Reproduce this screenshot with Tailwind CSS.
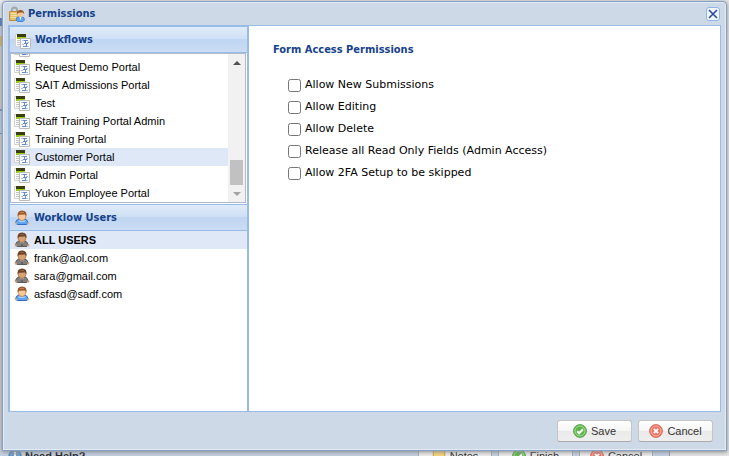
<!DOCTYPE html>
<html lang="en">
<head>
    <meta charset="UTF-8">
    <meta name="viewport" content="width=device-width, initial-scale=1.0">
    <title>Permissions</title>
    <script src="https://cdn.jsdelivr.net/npm/@tailwindcss/browser@4"></script>
</head>
<body class="relative flex flex-col h-screen overflow-hidden bg-[#e4e4e6] font-['Liberation_Sans',Arial,sans-serif] text-[11px] text-black">
    <!-- icons -->
    <svg class="hidden">
        <symbol id="form" viewBox="0 0 16 16">
            <path fill="#fff" stroke="#d2d2d2" d="M.5 1.500h10v12H.5z"/>
            <path fill="#3a3d10" d="M2 1h9v3H2z"/>
            <path fill="#98cc10" d="M2 4h9v2H2z"/>
            <path stroke="#c4c4c4" d="M2 7.500h3M2 9.500h3M2 11.500h3"/>
            <path fill="#fbfcff" stroke="#bcbcbc" d="M5.500 5.500h10v10h-10z"/>
            <path fill="none" stroke="#a9bfe6" d="M7 7.500h2M12 9.500h2M7 11.500h2M12 13.500h2"/>
            <path fill="none" stroke="#6689cc" d="M9 7.500h4M10.500 8v2M9 10.500h4M11.500 11v2M8 13.500h4"/>
        </symbol>
        <symbol id="user" viewBox="0 0 16 16">
            <path fill="#5ea6f5" stroke="#2c6dca" d="M1.500 12.500q.8-3 3.500-3.500h5.500q3 .5 3.500 3.500-.5 2-2 2H3.500q-1.500 0-2-2z"/>
            <path fill="#a9d2fd" d="M4 10.500h8l-1.500 1.500h-5z"/>
            <path fill="#eeb47f" d="M.5 12.500h2l.5 2H1zM13.500 12.500h2l-.5 2h-2z"/>
            <path fill="#f7c796" stroke="#c07c46" stroke-width=".7" d="M4.300 4h7.400v3.200q-.7 3.300-3.700 3.300T4.300 7.200z"/>
            <path fill="#9a5a2c" d="M3.600 6.500Q2.900.7 8 .5q5.400.2 4.400 6l-1.400-2.300-6 .5z"/>
            <path stroke="#c08050" d="M6 2.500h4"/>
        </symbol>
        <symbol id="user-gray" viewBox="0 0 16 16">
            <path fill="#808080" stroke="#5b5b5b" d="M1.500 12.500q.8-3 3.500-3.500h5.500q3 .5 3.500 3.500-.5 2-2 2H3.500q-1.500 0-2-2z"/>
            <path fill="#ddd" d="M6 10h4l-2 2.500z"/>
            <path fill="#444" d="M7.500 10.500h1v3.500h-1z"/>
            <path fill="#d9a273" d="M.5 12.500h2l.5 2H1zM13.500 12.500h2l-.5 2h-2z"/>
            <path fill="#d9a273" stroke="#94603a" stroke-width=".7" d="M4.300 4h7.400v3.200q-.7 3.300-3.700 3.300T4.300 7.200z"/>
            <path fill="#6b4329" d="M3.600 6.500Q2.900.7 8 .5q5.400.2 4.400 6l-1.400-2.300-6 .5z"/>
            <path stroke="#8d6142" d="M6 2.500h4"/>
        </symbol>
        <symbol id="lock-user" viewBox="0 0 16 16">
            <path fill="none" stroke="#a5a5a5" stroke-width="2" d="M3 7V4q0-2.500 2.500-2.500T8 4v3"/>
            <path fill="#e6bf6c" stroke="#c0913a" d="M.5 5.500h10v9H.5z"/>
            <path stroke="#f9e2a8" d="M2 7.500h7M2 9.500h6M2 11.500h5"/>
            <path fill="#5ea6f5" stroke="#2c6dca" stroke-width=".7" d="M7 14q0-3 3-3.500h2.500q3 .5 3 3.500l-1.500 1.500H8.500z"/>
            <path fill="#fff" d="M10.500 10.500h2l-1 4z"/>
            <path fill="#f7c796" d="M8.500 6h6v2.500q-.5 2.500-3 2.500t-3-2.500z"/>
            <path fill="#9a5a2c" d="M7.800 8.500Q7.500 4 11.500 4t3.700 4.500l-1.200-2-4.500.3z"/>
        </symbol>
        <symbol id="accept" viewBox="0 0 16 16">
            <circle cx="8" cy="8" r="7.300" fill="#5cb548" stroke="#4a9e3a"/>
            <circle cx="8" cy="8" r="5.700" fill="none" stroke="#b5dfab"/>
            <path fill="none" stroke="#fff" stroke-width="2.200" d="M4.800 8.300l2.300 2.300 4.300-4.600"/>
        </symbol>
        <symbol id="cross" viewBox="0 0 16 16">
            <circle cx="8" cy="8" r="7.300" fill="#ee7260" stroke="#dd5a48"/>
            <circle cx="8" cy="8" r="5.700" fill="none" stroke="#f9c0b6"/>
            <path fill="none" stroke="#fff" stroke-width="2.200" d="M5.500 5.500l5 5M10.500 5.500l-5 5"/>
        </symbol>
        <symbol id="info" viewBox="0 0 16 16">
            <circle cx="8" cy="8" r="7" fill="#6f9cc9" stroke="#386a9f"/>
            <path fill="#fff" d="M7 3h2v2H7zM7 6h2v7H7z"/>
        </symbol>
        <symbol id="note" viewBox="0 0 16 16">
            <path fill="#f5d57a" stroke="#d78f2c" d="M1.500 1.500h13v13h-13z"/>
        </symbol>
    </svg>

    <!-- page behind the window -->
    <div class="flex flex-col flex-1 w-2">
        <div class="h-[18px] bg-[#e9edf3]"></div>
        <div class="h-2 bg-[#4f78c4]"></div>
        <div class="h-2.5 bg-[#c3d0e3]"></div>
        <div class="h-2.5 bg-[#d9b168]"></div>
        <div class="h-16 border-b border-[#6e8fc4] bg-[#cccdd2]"></div>
        <div class="h-6 border-y border-[#6e8fc4] bg-[#b9cbe8]"></div>
        <div class="flex-1 bg-[#cccdd2]"></div>
    </div>
    <footer class="flex h-4 mr-[59px] pl-2 border-r border-[#8d9db5] bg-[#c3d0e3] text-[#222]">
        <div class="flex flex-1 items-center gap-[3px] h-8 font-bold">
            <svg class="size-3.5"><use href="#info"/></svg>Need Help?
        </div>
        <div class="flex gap-1.5 h-8 pr-4">
            <button class="flex items-center justify-center gap-1 w-[74px] h-8 border border-[#aaa] bg-[#ececec]"><svg class="size-3.5"><use href="#note"/></svg>Notes</button>
            <button class="flex items-center justify-center gap-1 w-[75px] h-8 border border-[#aaa] bg-[#ececec]"><svg class="size-3.5"><use href="#accept"/></svg>Finish</button>
            <button class="flex items-center justify-center gap-1 w-[74px] h-8 border border-[#aaa] bg-[#ececec]"><svg class="size-3.5"><use href="#cross"/></svg>Cancel</button>
        </div>
    </footer>

    <!-- window -->
    <section class="absolute top-px left-[2px] right-[2px] bottom-[5px] flex flex-col px-[5px] border border-[#84a0c4] rounded-t-sm bg-[#ced9e7] shadow-[0_1px_4px_#888,inset_0_0_0_1px_#e3ebf5]">
        <header class="flex items-center h-[23px] pt-px pr-px">
            <svg class="size-4 ml-px"><use href="#lock-user"/></svg>
            <h1 class="flex-1 ml-[3px] font-bold font-['DejaVu_Sans_Condensed',Tahoma,sans-serif] text-[#15428b]">Permissions</h1>
            <button aria-label="Close" class="size-[14px] border border-[#8fb6e6] rounded-[3px] bg-[#eff6ff]">
                <svg class="size-3" viewBox="0 0 12 12"><path stroke="#2c4a9e" stroke-width="1.600" d="M2 2l8 8M10 2l-8 8"/></svg>
            </button>
        </header>

        <main class="flex flex-1 min-h-0 border border-[#99bbe8] bg-white">
            <div class="flex flex-col w-[240px] border-l border-r-2 border-[#99bbe8]">
                <h2 class="flex items-center gap-1 h-[27px] pl-[5px] pt-[2px] border-y border-[#99bbe8] bg-[linear-gradient(#dfebf9,#d0e0f5_46%,#bfd5f2_48%,#cbdcf3)] font-bold font-['DejaVu_Sans_Condensed',Tahoma,sans-serif] text-[#15428b]">
                    <svg class="size-4"><use href="#form"/></svg>Workflows
                </h2>
                <div class="flex h-[150px] mr-px mb-px border border-[#b5b8c8]">
                    <ul class="flex flex-1 flex-col justify-end overflow-hidden">
                        <li class="flex shrink-0 items-center gap-[5px] h-[18px] pl-[3px]"><svg class="size-4"><use href="#form"/></svg></li>
                        <li class="flex shrink-0 items-center gap-[5px] h-[18px] pl-[3px]"><svg class="size-4"><use href="#form"/></svg>Request Demo Portal</li>
                        <li class="flex shrink-0 items-center gap-[5px] h-[18px] pl-[3px]"><svg class="size-4"><use href="#form"/></svg>SAIT Admissions Portal</li>
                        <li class="flex shrink-0 items-center gap-[5px] h-[18px] pl-[3px]"><svg class="size-4"><use href="#form"/></svg>Test</li>
                        <li class="flex shrink-0 items-center gap-[5px] h-[18px] pl-[3px]"><svg class="size-4"><use href="#form"/></svg>Staff Training Portal Admin</li>
                        <li class="flex shrink-0 items-center gap-[5px] h-[18px] pl-[3px]"><svg class="size-4"><use href="#form"/></svg>Training Portal</li>
                        <li class="flex shrink-0 items-center gap-[5px] h-[18px] pl-[3px] bg-[#dfe8f6]"><svg class="size-4"><use href="#form"/></svg>Customer Portal</li>
                        <li class="flex shrink-0 items-center gap-[5px] h-[18px] pl-[3px]"><svg class="size-4"><use href="#form"/></svg>Admin Portal</li>
                        <li class="flex shrink-0 items-center gap-[5px] h-[18px] pl-[3px]"><svg class="size-4"><use href="#form"/></svg>Yukon Employee Portal</li>
                    </ul>
                    <div class="flex flex-col items-center w-[17px] bg-[#f1f1f1]">
                        <svg class="w-2 h-[17px]" viewBox="0 0 8 17"><path fill="#505050" d="M0 11l4-4 4 4z"/></svg>
                        <div class="flex-1"></div>
                        <div class="w-[13px] h-[25px] bg-[#c1c1c1]"></div>
                        <svg class="w-2 h-[17px]" viewBox="0 0 8 17"><path fill="#a3a3a3" d="M0 7l4 4 4-4z"/></svg>
                    </div>
                </div>
                <h2 class="flex items-center gap-1 h-[27px] pl-1 pt-px border-y border-[#99bbe8] bg-[linear-gradient(#dfebf9,#d0e0f5_46%,#bfd5f2_48%,#cbdcf3)] font-bold font-['DejaVu_Sans_Condensed',Tahoma,sans-serif] text-[#15428b]">
                    <svg class="size-4"><use href="#user"/></svg>Worklow Users
                </h2>
                <ul>
                    <li class="flex items-center gap-1 h-[18px] pl-1 bg-[#dfe8f6] font-bold"><svg class="size-4"><use href="#user-gray"/></svg>ALL USERS</li>
                    <li class="flex items-center gap-1 h-[18px] pl-1"><svg class="size-4"><use href="#user-gray"/></svg>frank@aol.com</li>
                    <li class="flex items-center gap-1 h-[18px] pl-1"><svg class="size-4"><use href="#user-gray"/></svg>sara@gmail.com</li>
                    <li class="flex items-center gap-1 h-[18px] pl-1"><svg class="size-4"><use href="#user"/></svg>asfasd@sadf.com</li>
                </ul>
            </div>

            <form class="flex-1 pt-4 pl-6 font-['DejaVu_Sans',Verdana,sans-serif]">
                <h3 class="mb-4 leading-4 font-bold font-['DejaVu_Sans_Condensed',Tahoma,sans-serif] text-[#15428b]">Form Access Permissions</h3>
                <div class="flex flex-col pl-[15px]">
                    <label class="flex items-center gap-1 h-[22px]"><input type="checkbox" class="size-[13px]">Allow New Submissions</label>
                    <label class="flex items-center gap-1 h-[22px]"><input type="checkbox" class="size-[13px]">Allow Editing</label>
                    <label class="flex items-center gap-1 h-[22px]"><input type="checkbox" class="size-[13px]">Allow Delete</label>
                    <label class="flex items-center gap-1 h-[22px]"><input type="checkbox" class="size-[13px]">Release all Read Only Fields (Admin Access)</label>
                    <label class="flex items-center gap-1 h-[22px]"><input type="checkbox" class="size-[13px]">Allow 2FA Setup to be skipped</label>
                </div>
            </form>
        </main>

        <div class="flex items-center justify-end gap-1.5 h-[38px] pr-2 text-[#333]">
            <button class="flex items-center justify-center gap-1 w-[75px] h-[22px] border border-[#c4c4c4] border-b-[#aaa] rounded-[3px] bg-[linear-gradient(#fff,#f6f6f6_48%,#eaeaea_52%,#efefef)]"><svg class="size-3.5"><use href="#accept"/></svg>Save</button>
            <button class="flex items-center justify-center gap-1 w-[75px] h-[22px] border border-[#c4c4c4] border-b-[#aaa] rounded-[3px] bg-[linear-gradient(#fff,#f6f6f6_48%,#eaeaea_52%,#efefef)]"><svg class="size-3.5"><use href="#cross"/></svg>Cancel</button>
        </div>
    </section>
</body>
</html>
